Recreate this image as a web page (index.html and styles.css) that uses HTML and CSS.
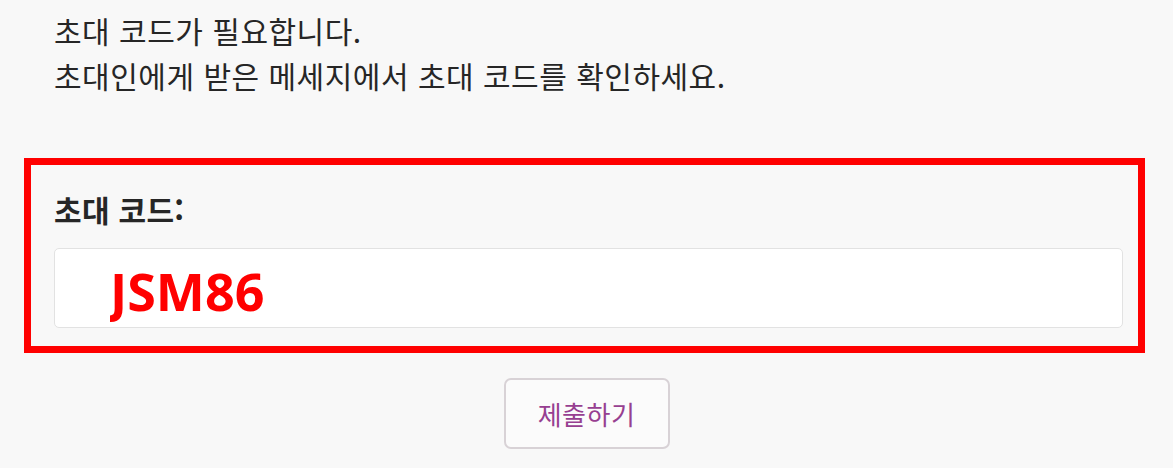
FILE: index.html
```html
<!DOCTYPE html>
<html lang="ko">
<head>
    <meta charset="UTF-8">
    <meta name="viewport" content="width=device-width, initial-scale=1.0">
    <title>초대 코드</title>
    <link rel="stylesheet" href="styles.css">
</head>
<body>
    <div class="intro">
        <p>초대 코드가 필요합니다.</p>
        <p>초대인에게 받은 메세지에서 초대 코드를 확인하세요.</p>
    </div>

    <div class="code-box">
        <label for="code">초대 코드:</label>
        <input type="text" id="code" value="JSM86">
    </div>

    <div class="actions">
        <button class="submit-btn">제출하기</button>
    </div>
</body>
</html>
```

FILE: styles.css
```css
body {
    font-family: "Noto Sans CJK KR", "Noto Sans", sans-serif;
    background: #f8f8f8;
    color: #262626;
    margin: 0;
}
.intro {
    padding: 8px 0 0 54px;
    font-size: 30px;
    letter-spacing: 0.5px;
    line-height: 45px;
}
.intro p {
    margin: 0;
}
.code-box {
    margin: 60px 28px 0 24px;
    border: 7px solid #ff0000;
    padding: 23px 15px 18px 23px;
}
.code-box label {
    display: block;
    font-size: 30px;
    letter-spacing: 0.3px;
    font-weight: bold;
    line-height: 42px;
    margin-bottom: 18px;
}
.code-box input {
    display: block;
    box-sizing: border-box;
    width: 100%;
    height: 80px;
    padding: 4px 0 0 55px;
    border: 1px solid #e2e2e2;
    border-radius: 5px;
    background: #fff;
    color: #ff0000;
    font-family: "Noto Sans", sans-serif;
    font-size: 52px;
    font-weight: bold;
    outline: none;
}
.actions {
    text-align: center;
    margin-top: 25px;
}
.submit-btn {
    width: 166px;
    height: 71px;
    background: #fbfbfb;
    border: 2px solid #d8d2d6;
    border-radius: 7px;
    color: #973f91;
    font-family: "Noto Sans CJK KR", sans-serif;
    font-size: 26px;
    letter-spacing: 0.5px;
    cursor: pointer;
}
```
